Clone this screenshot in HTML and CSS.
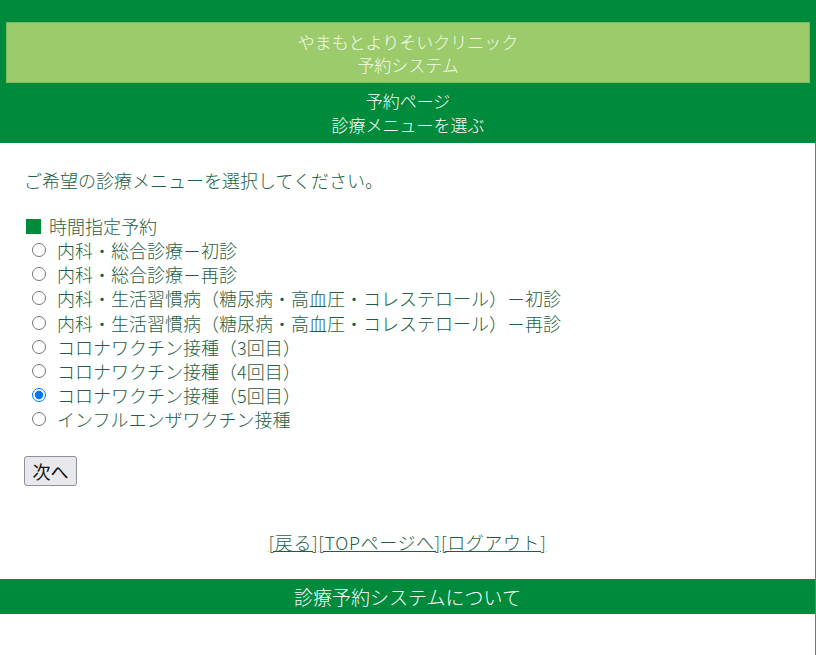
FILE: index.html
```html
<!DOCTYPE html>
<html lang="ja">
<head>
<meta charset="utf-8">
<title>予約システム</title>
<link rel="stylesheet" href="styles.css">
</head>
<body>
<header class="site-header">
  <div class="brand">
    <div>やまもとよりそいクリニック</div>
    <div>予約システム</div>
  </div>
  <div class="page-title">
    <div>予約ページ</div>
    <div>診療メニューを選ぶ</div>
  </div>
</header>
<div class="wrap">
  <main class="content">
    <p class="lead">ご希望の診療メニューを選択してください。</p>
    <form class="menu-form">
      <div class="group-title"><span class="sq"></span>時間指定予約</div>
      <label class="opt"><input type="radio" name="menu">内科・総合診療－初診</label>
      <label class="opt"><input type="radio" name="menu">内科・総合診療－再診</label>
      <label class="opt"><input type="radio" name="menu">内科・生活習慣病（糖尿病・高血圧・コレステロール）－初診</label>
      <label class="opt"><input type="radio" name="menu">内科・生活習慣病（糖尿病・高血圧・コレステロール）－再診</label>
      <label class="opt"><input type="radio" name="menu">コロナワクチン接種（3回目）</label>
      <label class="opt"><input type="radio" name="menu">コロナワクチン接種（4回目）</label>
      <label class="opt"><input type="radio" name="menu" checked>コロナワクチン接種（5回目）</label>
      <label class="opt"><input type="radio" name="menu">インフルエンザワクチン接種</label>
      <div class="actions"><button type="button" class="btn">次へ</button></div>
    </form>
    <nav class="links"><a href="#">[戻る]</a><a href="#">[TOPページへ]</a><a href="#">[ログアウト]</a></nav>
  </main>
  <footer class="site-footer">診療予約システムについて</footer>
</div>
</body>
</html>
```
FILE: styles.css
```css
html, body {
  margin: 0;
  padding: 0;
  background: #ffffff;
}
body {
  font-family: "Noto Sans CJK JP", "Noto Sans", sans-serif;
  font-size: 18px;
  line-height: 24px;
  color: #1d5f44;
  font-weight: 300;
}
.site-header {
  background: #008a3c;
  padding: 22px 6px 0;
  color: #ffffff;
  text-align: center;
  font-size: 17px;
}
.brand {
  background: #9ccb6b;
  border: 1px solid #7fbb5a;
  height: 59px;
  display: flex;
  flex-direction: column;
  justify-content: center;
  line-height: 23px;
  color: #f4fbef;
}
.page-title {
  height: 60px;
  display: flex;
  flex-direction: column;
  justify-content: center;
  line-height: 24px;
}
.wrap {
  border-right: 1px solid #777777;
  min-height: calc(100vh - 143px);
  box-sizing: border-box;
}
.content {
  padding: 25px 24px 0 24px;
}
.lead {
  margin: 0 0 22px;
}
.group-title {
  display: flex;
  align-items: center;
  margin-left: 2px;
}
.sq {
  width: 15px;
  height: 15px;
  background: #008a3c;
  margin-right: 8px;
}
.opt {
  display: flex;
  align-items: center;
  padding-left: 8px;
  height: 24.2px;
}
.opt input {
  width: 14px;
  height: 14px;
  margin: 0 11px 0 0;
}
.actions {
  margin-top: 24px;
}
.btn {
  font-family: inherit;
  font-size: 18px;
  font-weight: 400;
  color: #111111;
  background: #e9e9ed;
  border: 1px solid #8f8f9d;
  border-radius: 3px;
  height: 30px;
  width: 53px;
  padding: 0;
  line-height: 26px;
}
.links {
  text-align: center;
  margin-top: 44px;
  padding-bottom: 25px;
  letter-spacing: 0.6px;
}
.links a {
  color: #1d5f44;
  text-decoration: underline;
}
.site-footer {
  background: #008a3c;
  color: #ffffff;
  text-align: center;
  height: 35px;
  line-height: 35px;
  font-size: 19px;
}
```
